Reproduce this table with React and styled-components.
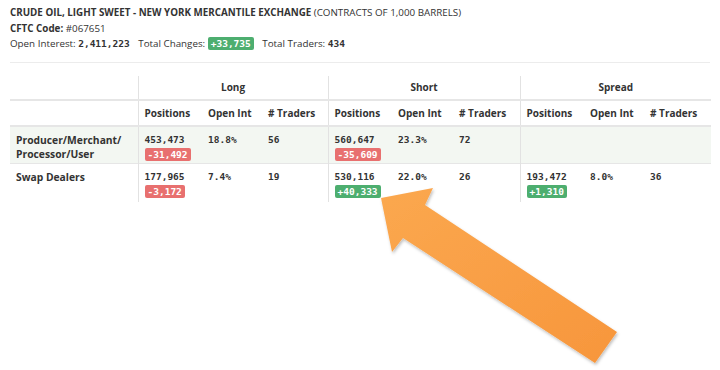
import React from "react";
import styled, { createGlobalStyle } from "styled-components";

const GlobalStyle = createGlobalStyle`
  html, body {
    margin: 0;
    padding: 0;
    background: #ffffff;
  }
  body {
    font-family: "Open Sans", "Liberation Sans", sans-serif;
    color: #333333;
  }
`;

const Page = styled.div`
  position: relative;
  width: 720px;
  height: 370px;
  padding: 5px 10px 0 10px;
  box-sizing: border-box;
  overflow: hidden;
`;

const Header = styled.div`
  font-size: 9.8px;
  line-height: 15.5px;
`;

const Line = styled.div`
  white-space: nowrap;
`;

const Bold = styled.span`
  font-weight: 700;
`;

const Mono = styled.span`
  font-family: "DejaVu Sans Mono", "Liberation Mono", monospace;
  font-weight: 700;
  font-size: 9.5px;
`;

const Stat = styled.span`
  margin-right: 6px;
`;

const Badge = styled.span`
  display: inline-block;
  font-family: "DejaVu Sans Mono", "Liberation Mono", monospace;
  font-weight: 700;
  font-size: 9.5px;
  line-height: 13px;
  padding: 0 3px;
  border-radius: 2px;
  color: #ffffff;
  background: ${(p) => (p.$up ? "#4dae6f" : "#e8706f")};
`;

const Divider = styled.div`
  height: 1px;
  background: #ececec;
  margin: 10px 0 13px 0;
`;

const Table = styled.table`
  width: 701px;
  border-collapse: collapse;
  table-layout: fixed;
  font-size: 10px;
`;

const GroupCell = styled.th`
  height: 23px;
  padding: 0;
  font-weight: 700;
  text-align: center;
  border-left: ${(p) => (p.$first ? "none" : "1px solid #e2e2e2")};
  border-bottom: 2px solid #e6e6e6;
`;

const SubCell = styled.th`
  height: 24px;
  padding: 0 0 0 6px;
  font-weight: 700;
  text-align: left;
  white-space: nowrap;
  border-left: ${(p) => (p.$edge ? "1px solid #e2e2e2" : "none")};
  border-bottom: 2px solid #e6e6e6;
`;

const Row = styled.tr`
  background: ${(p) => (p.$shade ? "#f3f7f2" : "#ffffff")};
  border-bottom: ${(p) => (p.$shade ? "1px solid #e6e6e6" : "none")};
`;

const LabelCell = styled.td`
  height: 38px;
  padding: 6px 6px 0 6px;
  vertical-align: top;
  font-weight: 700;
  font-size: 10.3px;
  line-height: 14px;
  box-sizing: border-box;
`;

const DataCell = styled.td`
  padding: 7px 0 0 6px;
  vertical-align: top;
  line-height: 12px;
  border-left: ${(p) => (p.$edge ? "1px solid #e2e2e2" : "none")};
  box-sizing: border-box;
`;

const Value = styled.div`
  font-family: "DejaVu Sans Mono", "Liberation Mono", monospace;
  font-weight: 700;
  font-size: 9.5px;
  margin-bottom: 2px;
`;

const ArrowLayer = styled.svg`
  position: absolute;
  left: 0;
  top: 0;
  pointer-events: none;
`;

const widths = [128, 64, 60, 66, 64, 61, 67, 64, 60, 67];
const subHeads = ["Positions", "Open Int", "# Traders"];

const rows = [
  {
    label: ["Producer/Merchant/", "Processor/User"],
    shade: true,
    cells: [
      { v: "453,473", c: "-31,492" },
      { v: "18.8%" },
      { v: "56" },
      { v: "560,647", c: "-35,609" },
      { v: "23.3%" },
      { v: "72" },
      {},
      {},
      {},
    ],
  },
  {
    label: ["Swap Dealers"],
    cells: [
      { v: "177,965", c: "-3,172" },
      { v: "7.4%" },
      { v: "19" },
      { v: "530,116", c: "+40,333", up: true },
      { v: "22.0%" },
      { v: "26" },
      { v: "193,472", c: "+1,310", up: true },
      { v: "8.0%" },
      { v: "36" },
    ],
  },
];

const Arrow = () => (
  <ArrowLayer width="720" height="370" viewBox="0 0 720 370">
    <defs>
      <linearGradient id="orange" x1="0" y1="0" x2="1" y2="1">
        <stop offset="0" stopColor="#fba84f" />
        <stop offset="1" stopColor="#f7963c" />
      </linearGradient>
      <filter id="soft" x="-10%" y="-10%" width="130%" height="130%">
        <feDropShadow dx="1" dy="2" stdDeviation="1.5" floodColor="#000" floodOpacity="0.25" />
      </filter>
    </defs>
    <polygon
      points="381,198 433,188 425,205 617,332 595,363 403,238 392,252"
      fill="url(#orange)"
      filter="url(#soft)"
    />
  </ArrowLayer>
);

export default function App() {
  return (
    <>
      <GlobalStyle />
      <Page>
        <Header>
          <Line>
            <Bold>CRUDE OIL, LIGHT SWEET - NEW YORK MERCANTILE EXCHANGE</Bold>{" "}
            (CONTRACTS OF 1,000 BARRELS)
          </Line>
          <Line>
            <Bold>CFTC Code:</Bold> #067651
          </Line>
          <Line>
            <Stat>
              Open Interest: <Mono>2,411,223</Mono>
            </Stat>{" "}
            <Stat>
              Total Changes: <Badge $up>+33,735</Badge>
            </Stat>{" "}
            <Stat>
              Total Traders: <Mono>434</Mono>
            </Stat>
          </Line>
        </Header>
        <Divider />
        <Table>
          <colgroup>
            {widths.map((w, i) => (
              <col key={i} style={{ width: w }} />
            ))}
          </colgroup>
          <thead>
            <tr>
              <GroupCell $first />
              <GroupCell colSpan={3}>Long</GroupCell>
              <GroupCell colSpan={3}>Short</GroupCell>
              <GroupCell colSpan={3}>Spread</GroupCell>
            </tr>
            <tr>
              <SubCell />
              {[0, 1, 2].map((g) =>
                subHeads.map((h, i) => (
                  <SubCell key={`${g}-${i}`} $edge={i === 0}>
                    {h}
                  </SubCell>
                ))
              )}
            </tr>
          </thead>
          <tbody>
            {rows.map((r, ri) => (
              <Row key={ri} $shade={r.shade}>
                <LabelCell>
                  {r.label.map((l) => (
                    <div key={l}>{l}</div>
                  ))}
                </LabelCell>
                {r.cells.map((c, ci) => (
                  <DataCell key={ci} $edge={ci % 3 === 0}>
                    {c.v && <Value>{c.v}</Value>}
                    {c.c && <Badge $up={c.up}>{c.c}</Badge>}
                  </DataCell>
                ))}
              </Row>
            ))}
          </tbody>
        </Table>
        <Arrow />
      </Page>
    </>
  );
}
